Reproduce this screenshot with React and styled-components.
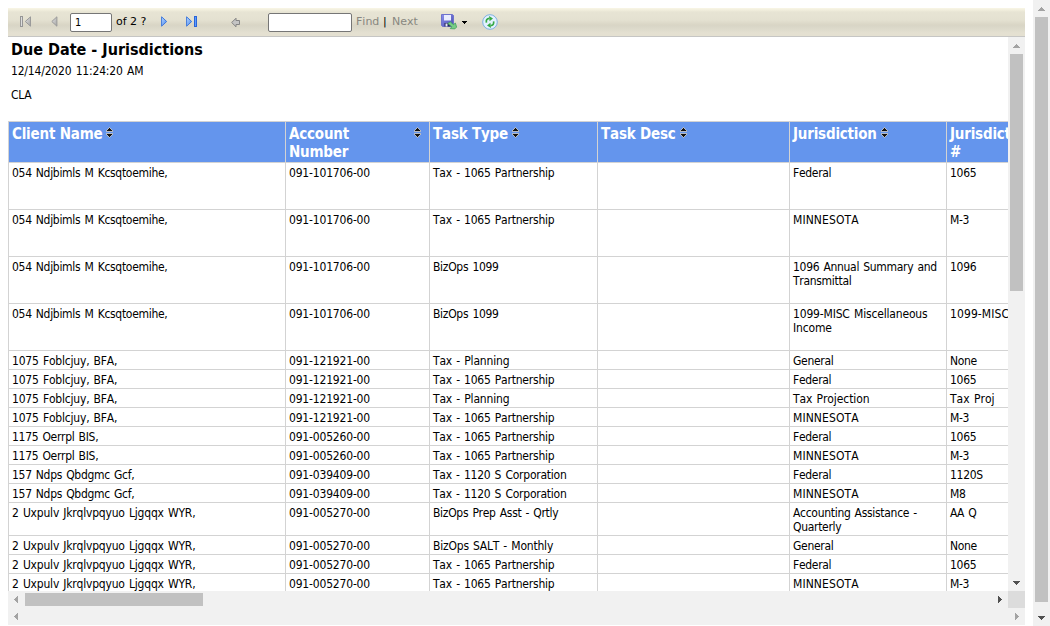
import React from 'react';
import styled, { createGlobalStyle } from 'styled-components';

const Global = createGlobalStyle`
  * { box-sizing: border-box; }
  body { margin: 0; background: #fff; overflow: hidden; }
`;

const Page = styled.div`
  display: flex;
  width: 1050px;
  height: 626px;
  background: #fff;
  overflow: hidden;
  color: #000;
  font-family: 'DejaVu Sans Condensed', 'DejaVu Sans', Tahoma, sans-serif;
  font-stretch: condensed;
  font-kerning: none;
  font-size: 12px;
  line-height: 14px;
`;

const Viewer = styled.main`
  display: flex;
  flex-direction: column;
  width: 1017px;
  margin: 8px 8px 1px 8px;
`;

const Toolbar = styled.div`
  display: flex;
  align-items: center;
  height: 29px;
  flex: none;
  border-bottom: 1px solid #c6c6c4;
  background: linear-gradient(#f9f6e6 0, #f1eedd 2px, #e7e4d4 4px, #e4e1d1 12px, #d9d5c5 17px, #dad7c8 19px, #e4e0d1 25px, #e4e0d1 28px);
  font-size: 11px;
`;

const IconSlot = styled.span`
  display: flex;
  flex: none;
  width: ${(p) => p.$w}px;
  margin-left: ${(p) => p.$gap || 0}px;
`;

const Field = styled.input`
  flex: none;
  width: ${(p) => p.$w}px;
  height: 19px;
  margin: 0 0 0 ${(p) => p.$gap}px;
  padding: 1px 3px 0 4px;
  border: 1px solid #767676;
  border-radius: 2px;
  background: #fff;
  color: #000;
  font-family: inherit;
  font-size: 11px;
  outline: none;
`;

const Label = styled.span`
  flex: none;
  width: ${(p) => p.$w}px;
  margin-left: ${(p) => p.$gap}px;
  color: ${(p) => (p.$muted ? '#888780' : '#000')};
  white-space: nowrap;
  font-family: 'DejaVu Sans', Verdana, sans-serif;
  font-stretch: normal;
`;

const Body = styled.div`
  display: flex;
  height: 554px;
  flex: none;
`;

const Report = styled.section`
  width: 1000px;
  height: 554px;
  overflow: hidden;
`;

const Heading = styled.header`
  height: 84px;
  padding: 3px 0 0 3px;
  white-space: nowrap;
`;

const Title = styled.h1`
  margin: 0;
  font-size: 16px;
  line-height: 19px;
  font-weight: bold;
`;

const Meta = styled.div`
  margin-top: ${(p) => p.$gap}px;
  letter-spacing: -0.18px;
  word-spacing: 1px;
`;

const Row = styled.div`
  display: grid;
  grid-template-columns: 277px 144px 168px 192px 157px 160px;
  width: 1098px;
  height: ${(p) => p.$h}px;
`;

const Cell = styled.div`
  padding: 3px 0 0 3px;
  border-left: 1px solid #d3d3d3;
  border-bottom: 1px solid #d3d3d3;
  white-space: pre;
  letter-spacing: ${(p) => -0.3 + (p.$track || 0)}px;
  word-spacing: 1px;
`;

const HeadCell = styled.div`
  display: flex;
  justify-content: ${(p) => (p.$spread ? 'space-between' : 'flex-start')};
  padding: 3px 8px 0 3px;
  border: solid #d3d3d3;
  border-width: 1px 0 1px 1px;
  background: #6495ed;
  color: #fff;
  font-size: 15px;
  font-weight: bold;
  line-height: 18px;
  white-space: pre;
  letter-spacing: -0.2px;
`;

const SortIcon = styled.svg`
  flex: none;
  width: 7px;
  height: 11px;
  margin: 2px 0 0 4px;
`;

const VScroll = styled.div`
  display: flex;
  flex-direction: column;
  align-items: center;
  width: 17px;
  height: ${(p) => p.$h}px;
  flex: none;
  background: #f1f1f1;
`;

const HScroll = styled.div`
  display: flex;
  align-items: center;
  width: ${(p) => p.$w}px;
  height: 17px;
  flex: none;
  background: #f1f1f1;
`;

const Thumb = styled.div`
  width: ${(p) => p.$w}px;
  height: ${(p) => p.$h}px;
  margin: 0 ${(p) => (p.$horizontal ? 'auto' : '0')} ${(p) => (p.$horizontal ? '0' : 'auto')} 0;
  background: #c1c1c1;
`;

const Spacer = styled.div`
  flex: 1;
`;

const Corner = styled.div`
  width: 17px;
  height: 17px;
  background: #dcdcdc;
`;

const BottomBar = styled.div`
  display: flex;
`;

const ArrowBox = styled.svg`
  flex: none;
  width: 17px;
  height: 17px;
`;

const ARROWS = {
  up: 'M8 7h1v1h1v1h1v1h1v1H5v-1h1V9h1V8h1z',
  down: 'M5 7h7v1h-1v1h-1v1H9v1H8v-1H7V9H6V8H5z',
  left: 'M10 5v7H9v-1H8v-1H7V9H6V8h1V7h1V6h1V5z',
  right: 'M7 5v7h1v-1h1v-1h1V9h1V8h-1V7H9V6H8V5z',
};

const Arrow = ({ dir, off }) => (
  <ArrowBox shapeRendering="crispEdges">
    <path d={ARROWS[dir]} fill={off ? '#a3a3a3' : '#505050'} />
  </ArrowBox>
);

const Sort = () => (
  <SortIcon viewBox="0 0 7 11" shapeRendering="crispEdges">
    <path d="M3 0h1v1h1v1h1v1h1v2H0V3h1V2h1V1h1z" fill="#b4b9c4" />
    <path d="M0 6h7v2H6v1H5v1H4v1H3v-1H2V9H1V8H0z" fill="#b4b9c4" />
    <path d="M3 1h1v1h1v1h1v1H1V3h1V2h1z" fill="#111" />
    <path d="M1 7h5v1H5v1H4v1H3V9H2V8H1z" fill="#111" />
  </SortIcon>
);

const Defs = () => (
  <defs>
    <linearGradient id="blue" x1="0" x2="1" y1="0" y2="1">
      <stop offset="0" stopColor="#c4e2ff" />
      <stop offset="1" stopColor="#3a7cf0" />
    </linearGradient>
    <linearGradient id="grey" x1="0" x2="1" y1="0" y2="1">
      <stop offset="0" stopColor="#e6e6e6" />
      <stop offset="1" stopColor="#a2a2a2" />
    </linearGradient>
    <linearGradient id="disk" x1="0" x2="1" y1="0" y2="1">
      <stop offset="0" stopColor="#8b90ee" />
      <stop offset="1" stopColor="#4a4cae" />
    </linearGradient>
  </defs>
);

const FirstIcon = () => (
  <svg width="12" height="12">
    <Defs />
    <rect x="0.5" y="0.5" width="2" height="10" fill="#ddd" stroke="#969696" />
    <path d="M10.5 0.8v9.4L5.3 5.5z" fill="url(#grey)" stroke="#9a9a9a" />
  </svg>
);

const PrevIcon = () => (
  <svg width="7" height="12">
    <path d="M5.9 0.8v9.4L0.8 5.5z" fill="url(#grey)" stroke="#9a9a9a" />
  </svg>
);

const NextIcon = () => (
  <svg width="7" height="12">
    <path d="M0.6 0.8v9.4L5.7 5.5z" fill="url(#blue)" stroke="#3f78da" />
  </svg>
);

const LastIcon = () => (
  <svg width="12" height="12">
    <path d="M0.6 0.8v9.4L5.7 5.5z" fill="url(#blue)" stroke="#3f78da" />
    <rect x="8.5" y="0.5" width="2" height="10" fill="#5b9cff" stroke="#2b65d8" />
  </svg>
);

const BackIcon = () => (
  <svg width="10" height="11">
    <path d="M0.7 5.5L5 1.2v2.3h3.5v4H5v2.3z" fill="#c4c4c4" stroke="#858585" strokeLinejoin="round" />
  </svg>
);

const SaveIcon = () => (
  <svg width="17" height="16">
    <path d="M0.5 0.5h11l1 1v11h-11l-1-1z" fill="url(#disk)" stroke="#6e73cc" />
    <path d="M3 1h7v5.5H3z" fill="#e9edff" />
    <path d="M3.5 9h6v3.5h-6z" fill="#24265c" />
    <path d="M4.5 9.5h2v3h-2z" fill="#e6e8fa" />
    <path d="M6.8 9.6l2.4-1.8 3.2 2.8 2-1.5 1.2 4-1.8 1.8-4.6-.3 1.6-1.8z" fill="#79cc86" stroke="#3f9f58" strokeWidth="0.8" />
  </svg>
);

const CaretIcon = () => (
  <svg width="5" height="3" shapeRendering="crispEdges">
    <path d="M0 0h5v1H4v1H3v1H2V2H1V1H0z" fill="#000" />
  </svg>
);

const RefreshIcon = () => (
  <svg width="16" height="16">
    <circle cx="8" cy="8" r="7.3" fill="#e3f1ff" stroke="#7db0e2" />
    <path d="M4.4 8.6C3.9 6 5 4.6 7.4 4.4" fill="none" stroke="#36a944" strokeWidth="1.7" />
    <path d="M7 2l4 2.6L7.6 7.2z" fill="#36a944" />
    <path d="M11.6 7.4c.5 2.6-.6 4-3 4.2" fill="none" stroke="#36a944" strokeWidth="1.7" />
    <path d="M9 14l-4-2.6 3.4-2.6z" fill="#36a944" />
  </svg>
);

const columns = [
  { label: 'Client Name' },
  { label: 'Account\nNumber', spread: true },
  { label: 'Task Type' },
  { label: 'Task Desc' },
  { label: 'Jurisdiction' },
  { label: 'Jurisdiction\n#', spread: true },
];

const A = '054 Ndjbimls M Kcsqtoemihe,';
const B = '1075 Foblcjuy, BFA,';
const C = '1175 Oerrpl BIS,';
const D = '157 Ndps Qbdgmc Gcf,';
const E = '2 Uxpulv Jkrqlvpqyuo Ljgqqx WYR,';
const P = 'Tax - 1065 Partnership';
const S = 'Tax - 1120 S Corporation';

// Extra tracking, in pixels, for the values that are set a little wider.
const tracking = {
  [B]: 0.1,
  [E]: 0.1,
  [P]: 0.08,
  [S]: 0.06,
  MINNESOTA: 0.4,
  'Tax - Planning': 0.12,
  'Tax Projection': 0.2,
  'Tax Proj': 0.3,
  'BizOps SALT - Monthly': 0.1,
  '1099-MISC Miscellaneous\nIncome': 0.13,
  '1099-MISC': 0.4,
};

const rows = [
  [47, A, '091-101706-00', P, 'Federal', '1065'],
  [47, A, '091-101706-00', P, 'MINNESOTA', 'M-3'],
  [47, A, '091-101706-00', 'BizOps 1099', '1096 Annual Summary and\nTransmittal', '1096'],
  [47, A, '091-101706-00', 'BizOps 1099', '1099-MISC Miscellaneous\nIncome', '1099-MISC'],
  [19, B, '091-121921-00', 'Tax - Planning', 'General', 'None'],
  [19, B, '091-121921-00', P, 'Federal', '1065'],
  [19, B, '091-121921-00', 'Tax - Planning', 'Tax Projection', 'Tax Proj'],
  [19, B, '091-121921-00', P, 'MINNESOTA', 'M-3'],
  [19, C, '091-005260-00', P, 'Federal', '1065'],
  [19, C, '091-005260-00', P, 'MINNESOTA', 'M-3'],
  [19, D, '091-039409-00', S, 'Federal', '1120S'],
  [19, D, '091-039409-00', S, 'MINNESOTA', 'M8'],
  [33, E, '091-005270-00', 'BizOps Prep Asst - Qrtly', 'Accounting Assistance -\nQuarterly', 'AA Q'],
  [19, E, '091-005270-00', 'BizOps SALT - Monthly', 'General', 'None'],
  [19, E, '091-005270-00', P, 'Federal', '1065'],
  [19, E, '091-005270-00', P, 'MINNESOTA', 'M-3'],
];

export default function App() {
  return (
    <Page>
      <Global />
      <Viewer>
        <Toolbar>
          <IconSlot $w={12} $gap={12}><FirstIcon /></IconSlot>
          <IconSlot $w={7} $gap={19}><PrevIcon /></IconSlot>
          <Field $w={42} $gap={12} defaultValue="1" />
          <Label $w={36} $gap={4}>of 2 ?</Label>
          <IconSlot $w={7} $gap={9}><NextIcon /></IconSlot>
          <IconSlot $w={12} $gap={18}><LastIcon /></IconSlot>
          <IconSlot $w={10} $gap={33}><BackIcon /></IconSlot>
          <Field $w={84} $gap={27} />
          <Label $w={24} $gap={4} $muted>Find</Label>
          <Label $w={4} $gap={3}>|</Label>
          <Label $w={27} $gap={5} $muted>Next</Label>
          <IconSlot $w={17} $gap={22}><SaveIcon /></IconSlot>
          <IconSlot $w={5} $gap={4}><CaretIcon /></IconSlot>
          <IconSlot $w={16} $gap={15}><RefreshIcon /></IconSlot>
        </Toolbar>
        <Body>
          <Report>
            <Heading>
              <Title>Due Date - Jurisdictions</Title>
              <Meta $gap={5}>12/14/2020 11:24:20 AM</Meta>
              <Meta $gap={10}>CLA</Meta>
            </Heading>
            <Row $h={42}>
              {columns.map((c) => (
                <HeadCell key={c.label} $spread={c.spread}>
                  <span>{c.label}</span>
                  <Sort />
                </HeadCell>
              ))}
            </Row>
            {rows.map(([h, client, account, type, jurisdiction, number], i) => (
              <Row key={i} $h={h}>
                <Cell $track={tracking[client]}>{client}</Cell>
                <Cell $track={0.12}>{account}</Cell>
                <Cell $track={tracking[type]}>{type}</Cell>
                <Cell />
                <Cell $track={tracking[jurisdiction]}>{jurisdiction}</Cell>
                <Cell $track={tracking[number]}>{number}</Cell>
              </Row>
            ))}
          </Report>
          <VScroll $h={554}>
            <Arrow dir="up" off />
            <Thumb $w={13} $h={237} />
            <Arrow dir="down" />
          </VScroll>
        </Body>
        <BottomBar>
          <HScroll $w={1000}>
            <Arrow dir="left" off />
            <Thumb $horizontal $w={178} $h={13} />
            <Arrow dir="right" />
          </HScroll>
          <Corner />
        </BottomBar>
        <HScroll $w={1017}>
          <Arrow dir="left" off />
          <Spacer />
          <Arrow dir="right" off />
        </HScroll>
      </Viewer>
      <VScroll $h={626}>
        <Arrow dir="up" off />
        <Thumb $w={13} $h={585} />
        <Arrow dir="down" />
      </VScroll>
    </Page>
  );
}
